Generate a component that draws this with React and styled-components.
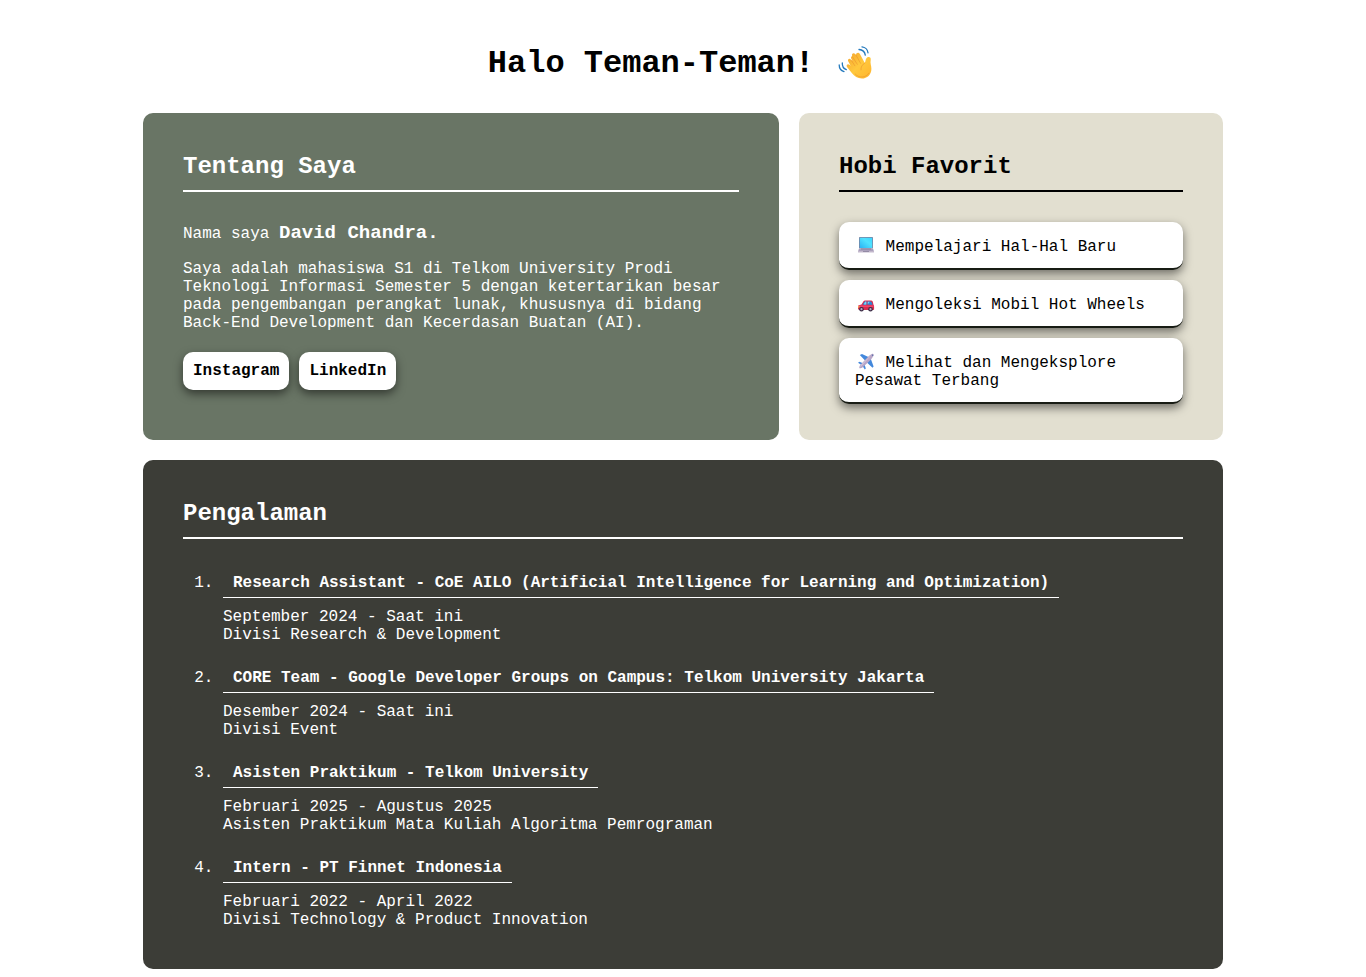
import React from 'react';
import styled, { createGlobalStyle } from 'styled-components';

const GlobalStyle = createGlobalStyle`
  * { box-sizing: border-box; }
  body {
    margin: 0;
    background: #fff;
    color: #000;
    font-family: "Courier New", "Liberation Mono", monospace;
    font-size: 16px;
    line-height: 18px;
  }
`;

const Page = styled.main`
  max-width: 1120px;
  margin: 0 auto;
  padding: 46px 20px 8px;
`;

const Title = styled.h1`
  margin: 0 0 31px;
  display: flex;
  justify-content: center;
  align-items: center;
  gap: 20px;
  font-size: 32px;
  line-height: 36px;
`;

const Wave = styled.svg`
  width: 44px;
  height: 36px;
`;

const Grid = styled.div`
  display: grid;
  grid-template-columns: 3fr 2fr;
  gap: 20px;
  @media (max-width: 760px) { grid-template-columns: 1fr; }
`;

const tones = {
  green: ['#697565', '#fff'],
  sand: ['#e2dfd0', '#000'],
  dark: ['#3c3d37', '#fff'],
};

const Card = styled.section`
  padding: 40px 40px ${p => (p.$tone === 'sand' ? 36 : 40)}px;
  border-radius: 10px;
  background: ${p => tones[p.$tone][0]};
  color: ${p => tones[p.$tone][1]};
  ${p => p.$wide && 'grid-column: 1 / -1;'}
`;

const Heading = styled.h2`
  margin: 0 0 30px;
  padding-bottom: 10px;
  border-bottom: 2px solid currentColor;
  font-size: 24px;
  line-height: 27px;
`;

const Text = styled.p`
  margin: 0 0 15px;
`;

const Name = styled.strong`
  font-size: 19px;
  line-height: 23px;
`;

const Links = styled.nav`
  display: flex;
  flex-wrap: wrap;
  gap: 10px;
  margin: 20px 0 10px;
`;

const LinkButton = styled.a`
  padding: 10px;
  border-radius: 10px;
  background: #fff;
  color: #000;
  font-weight: bold;
  text-decoration: none;
  box-shadow: 0 4px 10px rgba(0, 0, 0, 0.5);
`;

const HobbyList = styled.ul`
  display: grid;
  gap: 10px;
  margin: 0;
  padding: 0;
  list-style: none;
`;

const Hobby = styled.li`
  padding: 16px 16px 12px;
  border-bottom: 2px solid #181c14;
  border-radius: 10px;
  background: #fff;
  box-shadow: 0 4px 10px rgba(0, 0, 0, 0.5);
`;

const Emoji = styled.svg`
  width: 21px;
  height: 18px;
  vertical-align: bottom;
  overflow: visible;
`;

const Jobs = styled.ol`
  margin: 0;
  padding-left: 40px;
  display: grid;
  gap: 20px;
`;

const JobTitle = styled.h3`
  display: inline-block;
  margin: 0 0 10px;
  padding: 5px 10px;
  border-bottom: 1px solid #fff;
  font-size: 16px;
  line-height: 18px;
`;

const JobText = styled.p`
  margin: 0;
`;

const WavingHand = () => (
  <Wave viewBox="0 0 44 36" role="img" aria-label="Melambai">
    <defs>
      <linearGradient id="skin" x1="0" y1="0" x2="1" y2="1">
        <stop offset="0" stopColor="#f5a52f" />
        <stop offset=".5" stopColor="#ffc83d" />
        <stop offset="1" stopColor="#ffb52e" />
      </linearGradient>
    </defs>
    <g fill="none" stroke="#2479bd" strokeWidth="1.3" strokeLinecap="round">
      <path d="M25 3.500c3.200.2 5.800 2.400 6.300 5.600M28 .8c3 .3 5.700 2.700 6 6" />
      <path d="M8.300 17c-.2 3.400 1.300 5.600 4 6.700M5.200 19c0 3.500 1.800 5.700 4.800 6.600" />
    </g>
    <path fill="url(#skin)" d="M18.200 10c-1-2.200 1.500-3.700 3-1.900l.8 1c0-2.600 2.800-3 3.900-1.200l4.900 9c1-1.800.5-4.500 2.600-5.700 2.100-1 3.800.5 3.300 2.700-.7 3.200.7 5.600.7 8.800 0 6-4.300 9.800-9.500 9.800-4.500 0-7.500-2.200-9.900-5.200l-5-6.300c-1.200-2 .8-3.700 2.500-2.200l1.200 1-2.400-4.200c-1.100-2.200 1-3.700 2.500-2.200l1.600 1.700-1.300-2.800c-.3-1 .2-1.900 1.100-2.300z" />
    <path fill="none" stroke="#e9942d" strokeWidth=".6" strokeLinecap="round" d="M18.600 11l4.700 7.300M22 9.100l4.600 8.200M17.400 14.500l3.500 5.300M30.800 17c-2.700 1.700-4.200 4-3.800 6.900M21.200 28c3.600 4.500 10.800 3.900 13.700-.8" />
  </Wave>
);

const Laptop = () => (
  <Emoji viewBox="0 2 21 18" role="img" aria-label="Laptop">
    <defs>
      <linearGradient id="screen" x1="0" y1="1" x2="1" y2="0">
        <stop offset="0" stopColor="#29b2f3" />
        <stop offset=".6" stopColor="#50e2ff" />
        <stop offset="1" stopColor="#3bd5ff" />
      </linearGradient>
    </defs>
    <rect x="4" y="1" width="14" height="11.500" rx=".8" fill="#7d7a99" />
    <rect x="4.700" y="1.700" width="12.600" height="10.300" fill="url(#screen)" />
    <path fill="#aaa0bb" d="M4 12.500h14l.8 2.500H3.200z" />
    <path fill="#887d9b" d="M6 12.500h10v1H6z" />
    <path fill="#c3b8cc" d="M3 15h16v1.500H3z" />
    <path fill="#89809b" d="M8 15h6v.8H8z" />
  </Emoji>
);

const Car = () => (
  <Emoji viewBox="0 0 21 18" role="img" aria-label="Mobil">
    <path fill="#d92c50" d="M3.200 9.500 6.500 8.600 8.500 5.200Q9 4.500 10 4.500h6q1.200 0 1.700 1L18.500 8.800q.6.500.6 1.700v2.800q0 .7-.9.700H4.500Q3 14 3 12.600z" />
    <path fill="#2788d8" d="M7.600 8.700 9.200 6q.3-.6 1-.6h1.300v3.300zM12.500 5.400h3q.7 0 1 .6l1.100 2.700h-5.100z" />
    <path fill="#7bd8f7" d="M9.200 7.500 10.300 5.600h1v3H9zM12.800 5.700h2l-2 2.500z" />
    <path fill="#ff557b" d="M4 9.700h14.500v.9H4z" />
    <path fill="#ffc34b" d="M3 10.300h1.500v1.300H3z" />
    <circle cx="6.500" cy="13.200" r="2.300" fill="#3b2b45" />
    <circle cx="15.500" cy="13.200" r="2.300" fill="#3b2b45" />
    <circle cx="6.500" cy="13.200" r="1.100" fill="#bba9c7" />
    <circle cx="15.500" cy="13.200" r="1.100" fill="#bba9c7" />
  </Emoji>
);

const Plane = () => (
  <Emoji viewBox="0 2 21 18" role="img" aria-label="Pesawat">
    <path fill="#4388dc" d="M4.800 3 7 2 15 5.700 11 9.400zM18.600 14.500 17.500 15.800 10.800 9.500 15.500 6zM3 10.700 4.500 9.800 8 11.200 6.500 12.900zM10.800 16.500 9.800 17.400 7.500 14 9.500 12.200z" />
    <path fill="#b7a5c7" d="M16.800 2c1.500-.6 2.400.2 1.700 1.700-1 2.200-3 4.200-5 6.200l-5.500 5c-1.500 1.200-2.700 1.600-3.600 1.400-.4-1 .1-2.200 1.300-3.700L10.700 7.300C12.700 5.100 14.500 3 16.800 2z" />
    <path fill="#d3c6d9" d="m15 3.900 1.500-.9-8.200 8.900-3.200 3.100.8-1.900z" />
    <path fill="#355e9e" d="m16.800 2.900.6-.5 1 .9-.5.700z" />
  </Emoji>
);

const hobbies = [
  [Laptop, 'Mempelajari Hal-Hal Baru'],
  [Car, 'Mengoleksi Mobil Hot Wheels'],
  [Plane, 'Melihat dan Mengeksplore Pesawat Terbang'],
];

const jobs = [
  ['Research Assistant - CoE AILO (Artificial Intelligence for Learning and Optimization)', 'September 2024 - Saat ini', 'Divisi Research & Development'],
  ['CORE Team - Google Developer Groups on Campus: Telkom University Jakarta', 'Desember 2024 - Saat ini', 'Divisi Event'],
  ['Asisten Praktikum - Telkom University', 'Februari 2025 - Agustus 2025', 'Asisten Praktikum Mata Kuliah Algoritma Pemrograman'],
  ['Intern - PT Finnet Indonesia', 'Februari 2022 - April 2022', 'Divisi Technology & Product Innovation'],
];

export default function App() {
  return (
    <>
      <GlobalStyle />
      <Page>
        <Title>Halo Teman-Teman! <WavingHand /></Title>
        <Grid>
          <Card $tone="green">
            <Heading>Tentang Saya</Heading>
            <Text>Nama saya <Name>David Chandra.</Name></Text>
            <Text>
              Saya adalah mahasiswa S1 di Telkom University Prodi Teknologi Informasi
              Semester 5 dengan ketertarikan besar pada pengembangan perangkat lunak,
              khususnya di bidang Back-End Development dan Kecerdasan Buatan (AI).
            </Text>
            <Links>
              <LinkButton href="#instagram">Instagram</LinkButton>
              <LinkButton href="#linkedin">LinkedIn</LinkButton>
            </Links>
          </Card>
          <Card $tone="sand">
            <Heading>Hobi Favorit</Heading>
            <HobbyList>
              {hobbies.map(([Icon, label]) => (
                <Hobby key={label}><Icon /> {label}</Hobby>
              ))}
            </HobbyList>
          </Card>
          <Card $tone="dark" $wide>
            <Heading>Pengalaman</Heading>
            <Jobs>
              {jobs.map(([title, period, role]) => (
                <li key={title}>
                  <JobTitle>{title}</JobTitle>
                  <JobText>{period}</JobText>
                  <JobText>{role}</JobText>
                </li>
              ))}
            </Jobs>
          </Card>
        </Grid>
      </Page>
    </>
  );
}
